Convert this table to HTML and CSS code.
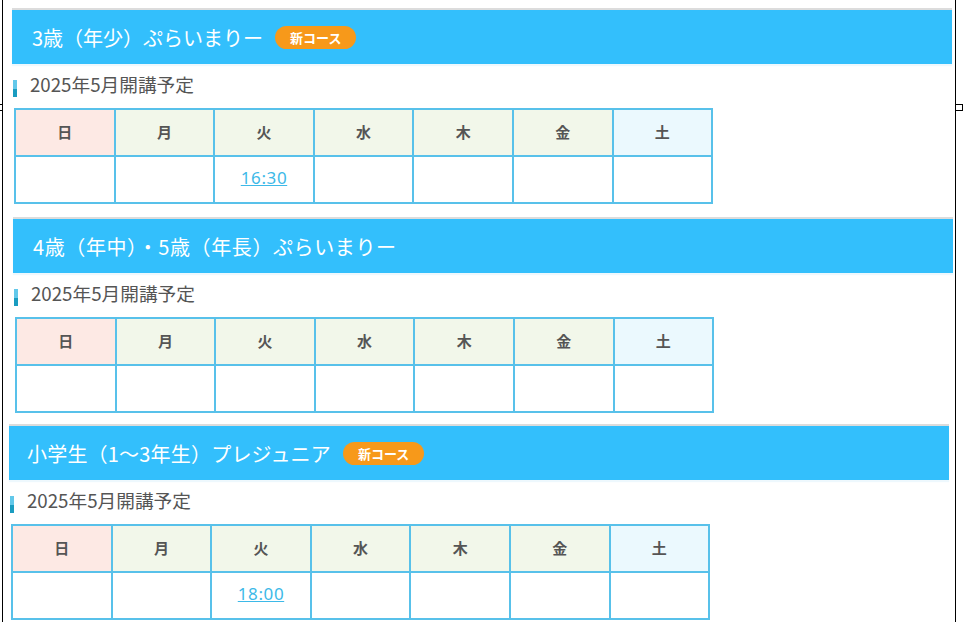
FILE: index.html
```html
<!DOCTYPE html>
<html lang="ja">
<head>
<meta charset="utf-8">
<title>コース一覧</title>
<link rel="stylesheet" href="styles.css">
</head>
<body>
<div class="page">
  <section class="course course--a">
    <h2 class="course__head">3歳（年少）ぷらいまりー<span class="badge">新コース</span></h2>
    <p class="course__sub"><span class="course__bar"></span><span class="course__date">2025年5月開講予定</span></p>
    <table class="week">
      <tr>
        <th class="sun">日</th><th class="wd">月</th><th class="wd">火</th><th class="wd">水</th><th class="wd">木</th><th class="wd">金</th><th class="sat">土</th>
      </tr>
      <tr>
        <td></td><td></td><td><a href="#" class="time">16:30</a></td><td></td><td></td><td></td><td></td>
      </tr>
    </table>
  </section>

  <section class="course course--b">
    <h2 class="course__head">4歳（年中）・5歳（年長）ぷらいまりー</h2>
    <p class="course__sub"><span class="course__bar"></span><span class="course__date">2025年5月開講予定</span></p>
    <table class="week">
      <tr>
        <th class="sun">日</th><th class="wd">月</th><th class="wd">火</th><th class="wd">水</th><th class="wd">木</th><th class="wd">金</th><th class="sat">土</th>
      </tr>
      <tr>
        <td></td><td></td><td></td><td></td><td></td><td></td><td></td>
      </tr>
    </table>
  </section>

  <section class="course course--c">
    <h2 class="course__head">小学生（1～3年生）プレジュニア<span class="badge">新コース</span></h2>
    <p class="course__sub"><span class="course__bar"></span><span class="course__date">2025年5月開講予定</span></p>
    <table class="week">
      <tr>
        <th class="sun">日</th><th class="wd">月</th><th class="wd">火</th><th class="wd">水</th><th class="wd">木</th><th class="wd">金</th><th class="sat">土</th>
      </tr>
      <tr>
        <td></td><td></td><td><a href="#" class="time">18:00</a></td><td></td><td></td><td></td><td></td>
      </tr>
    </table>
  </section>
</div>
<div class="frame">
  <span class="handle handle--l"></span>
  <span class="handle handle--r"></span>
</div>
</body>
</html>
```
FILE: styles.css
```css
html, body {
  margin: 0;
  padding: 0;
  background: #fff;
}
body {
  font-family: "Noto Sans CJK JP", "Noto Sans", sans-serif;
  color: #555;
  overflow: hidden;
}
.page {
  padding: 8px 0 0 12px;
}
.course {
  width: 940px;
  margin-bottom: 13px;
}
.course--b { margin-left: 1px; margin-bottom: 11px; }
.course--c { margin-left: -3px; }

.course__head {
  margin: 0;
  height: 54px;
  border-top: 2px solid #dcdcdc;
  background: #33bffc;
  box-shadow: 0 2px 1px #eef8fd;
  display: flex;
  align-items: center;
  padding-left: 20px;
  color: #fff;
  font-size: 20px;
  font-weight: normal;
}
.course--b .course__head { letter-spacing: 0.6px; }
.course--c .course__head { padding-left: 18px; letter-spacing: 0.2px; }

.badge {
  margin-left: 12px;
  height: 23px;
  padding: 0 15px;
  border-radius: 12px;
  background: #f7991a;
  color: #fff;
  font-size: 13px;
  font-weight: bold;
  letter-spacing: 0;
  display: inline-flex;
  align-items: center;
}

.course__sub {
  margin: 9px 0 11px 1px;
  height: 24px;
  display: flex;
  align-items: flex-start;
  gap: 13px;
  color: #555;
}
.course__date {
  font-size: 18.7px;
  line-height: 21px;
}
.course__bar {
  width: 4px;
  height: 17px;
  flex: none;
  background: linear-gradient(#62c8ea 0, #62c8ea 50%, #1a9cc0 50%, #1a9cc0 100%);
  align-self: flex-end;
}

.week {
  margin-left: 2px;
  border-collapse: collapse;
}
.week th,
.week td {
  width: 97.6px;
  height: 45px;
  padding: 0;
  border: 2px solid #58c1ea;
  text-align: center;
  vertical-align: middle;
}
.week th {
  font-size: 15px;
  font-weight: bold;
  color: #555;
  line-height: 20px;
  padding-bottom: 2px;
  height: 43px;
}
.week td {
  background: #fff;
  padding-bottom: 4px;
  height: 41px;
  line-height: 20px;
}
.week .sun { background: #fde9e4; }
.week .wd { background: #f2f7ea; }
.week .sat { background: #ebf9fe; }

.time {
  color: #3db9e8;
  font-family: "Noto Sans", sans-serif;
  font-size: 17px;
  letter-spacing: 0.6px;
  text-decoration: underline;
}

.frame {
  position: fixed;
  left: 2px;
  top: -2px;
  bottom: -2px;
  width: 952px;
  border-left: 1px solid #000;
  border-right: 1px solid #000;
  pointer-events: none;
}
.handle {
  position: absolute;
  top: 106px;
  width: 6px;
  height: 5px;
  border: 1px solid #000;
  background: #fff;
}
.handle--l { left: -8px; }
.handle--r { left: 952px; }
```
